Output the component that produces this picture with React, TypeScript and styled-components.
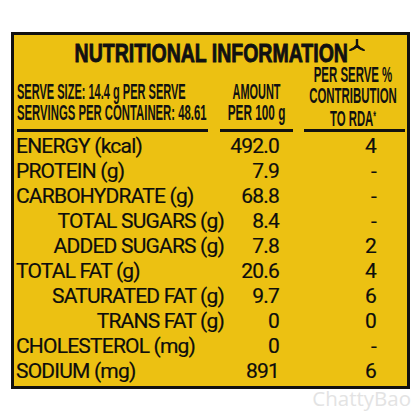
import React from 'react';
import styled, { createGlobalStyle } from 'styled-components';

const GlobalStyle = createGlobalStyle`
  html, body {
    margin: 0;
    padding: 0;
    background: #fff;
  }
  body {
    width: 420px;
    height: 420px;
    overflow: hidden;
    font-family: "Liberation Sans", Arial, sans-serif;
  }
`;

interface Nutrient {
  label: string;
  amount: string;
  rda: string;
  sub?: boolean;
}

const nutrients: Array<Nutrient> = [
  { label: 'ENERGY (kcal)', amount: '492.0', rda: '4' },
  { label: 'PROTEIN (g)', amount: '7.9', rda: '-' },
  { label: 'CARBOHYDRATE (g)', amount: '68.8', rda: '-' },
  { label: 'TOTAL SUGARS (g)', amount: '8.4', rda: '-', sub: true },
  { label: 'ADDED SUGARS (g)', amount: '7.8', rda: '2', sub: true },
  { label: 'TOTAL FAT (g)', amount: '20.6', rda: '4' },
  { label: 'SATURATED FAT (g)', amount: '9.7', rda: '6', sub: true },
  { label: 'TRANS FAT (g)', amount: '0', rda: '0', sub: true },
  { label: 'CHOLESTEROL (mg)', amount: '0', rda: '-' },
  { label: 'SODIUM (mg)', amount: '891', rda: '6' },
];

const App: React.FC = () => {
  return (
    <Page>
      <GlobalStyle />
      <Panel>
        <TitleRow>
          <Title>NUTRITIONAL INFORMATION</Title>
          <Mark width="16" height="12" viewBox="0 0 16 12">
            <path d="M8 0 V7" stroke="#111" strokeWidth="2.4" fill="none" />
            <path d="M8 5.6 Q4.8 9 0.3 11 L0.9 11.8 Q5.4 10.4 8 8.2 Z" fill="#111" stroke="#111" strokeWidth="1" />
            <path d="M8 5.6 Q11.2 9 15.7 11 L15.1 11.8 Q10.6 10.4 8 8.2 Z" fill="#111" stroke="#111" strokeWidth="1" />
          </Mark>
        </TitleRow>

        <HeadGrid>
          <HeadCell $bottom={6}>
            <LeftLine $scale={0.49}>SERVE SIZE: 14.4 g PER SERVE</LeftLine>
            <LeftLine $scale={0.503}>SERVINGS PER CONTAINER: 48.61</LeftLine>
          </HeadCell>
          <HeadCell $bottom={6}>
            <CenterLine $scale={0.486}>AMOUNT</CenterLine>
            <CenterLine $scale={0.524}>PER 100 g</CenterLine>
          </HeadCell>
          <HeadCell $bottom={0}>
            <CenterLine $scale={0.508}>PER SERVE %</CenterLine>
            <CenterLine $scale={0.508}>CONTRIBUTION</CenterLine>
            <CenterLine $scale={0.505}>
              TO RDA<Star>*</Star>
            </CenterLine>
          </HeadCell>
        </HeadGrid>

        <HeadGrid>
          <Rule $inset="0 6px 0 3px" />
          <Rule $inset="0 6px 0 6px" />
          <Rule $inset="0 2px 0 5px" />
        </HeadGrid>

        <Rows>
          {nutrients.map((item, key) => {
            return (
              <Row key={key}>
                <Label $sub={item.sub}>{item.label}</Label>
                <Amount>{item.amount}</Amount>
                <Rda>{item.rda}</Rda>
              </Row>
            );
          })}
        </Rows>
      </Panel>
      <Watermark>ChattyBao</Watermark>
    </Page>
  );
};

export default App;

const Page = styled.div`
  padding: 32px 0 0 11px;
`;

const Panel = styled.div`
  width: 399px;
  box-sizing: border-box;
  border: 3px solid #111;
  background: #ecc112;
  padding: 4.6px 0 2px;
  color: #111;
`;

const TitleRow = styled.div`
  position: relative;
  display: flex;
  justify-content: center;
  height: 24.4px;
`;

const Title = styled.span`
  display: inline-block;
  margin-left: 2px;
  font-weight: 700;
  font-size: 26px;
  line-height: 26px;
  white-space: nowrap;
  transform: scaleX(0.75);
  -webkit-text-stroke: 0.9px #111;
`;

const Mark = styled.svg`
  position: absolute;
  left: calc(50% + 138px);
  top: -1px;
`;

const HeadGrid = styled.div`
  display: grid;
  grid-template-columns: 200px 85px 1fr;
  align-items: end;
  font-size: 22.5px;
  font-weight: 700;
  line-height: 21px;
`;

const HeadCell = styled.div<{ $bottom: number }>`
  padding-bottom: ${p => p.$bottom}px;
`;

const LeftLine = styled.div<{ $scale: number }>`
  padding-left: 3px;
  white-space: nowrap;
  transform: scaleX(${p => p.$scale});
  transform-origin: 3px center;
`;

const CenterLine = styled.div<{ $scale: number }>`
  margin: 0 -60px;
  text-align: center;
  white-space: nowrap;
  transform: scaleX(${p => p.$scale});
  transform-origin: center;
`;

const Star = styled.span`
  font-size: 14px;
  vertical-align: 5px;
`;

const Rule = styled.div<{ $inset: string }>`
  height: 3px;
  background: #111;
  margin: ${p => p.$inset};
`;

const Rows = styled.div`
  margin-top: 2px;
`;

const Row = styled.div`
  display: grid;
  grid-template-columns: 212px 55px 1fr;
  height: 25px;
  font-family: Roboto, "Liberation Sans", sans-serif;
  font-size: 21px;
  line-height: 25px;
  letter-spacing: -0.8px;
  white-space: nowrap;
  color: #0d0d0d;
  -webkit-text-stroke: 0.2px #0d0d0d;
`;

const Label = styled.div<{ $sub?: boolean }>`
  text-align: ${p => (p.$sub ? 'right' : 'left')};
  padding: ${p => (p.$sub ? '0 2px 0 0' : '0 0 0 2px')};
`;

const Amount = styled.div`
  text-align: right;
  padding-right: 2px;
`;

const Rda = styled.div`
  text-align: right;
  padding-right: 31px;
`;

const Watermark = styled.div`
  padding-right: 9px;
  text-align: right;
  font-family: "Open Sans", "Liberation Sans", sans-serif;
  font-size: 20.5px;
  line-height: 19px;
  color: #e3e3e3;
`;
